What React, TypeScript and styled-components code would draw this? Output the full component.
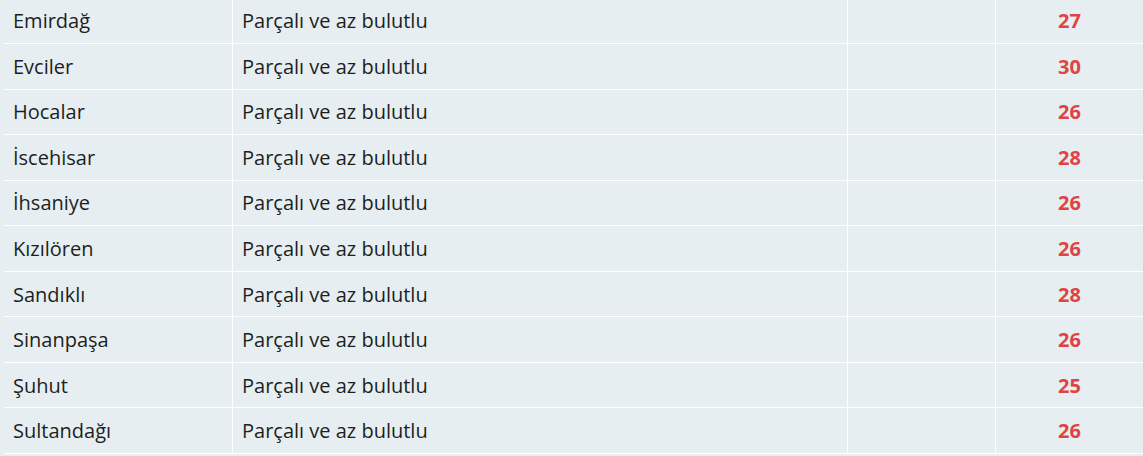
import styled, { createGlobalStyle } from 'styled-components';

const GlobalStyle = createGlobalStyle`
  html, body {
    margin: 0;
    padding: 0;
    background-color: #e7eef2;
    font-family: "Open Sans", "Liberation Sans", sans-serif;
    overflow: hidden;
  }
`;

const TableWrap = styled.div`
  padding-left: 4px;
  margin-top: -1.5px;
`;

const Row = styled.div`
  display: grid;
  grid-template-columns: 229px 615px 148px 1fr;
  height: 45.55px;
  box-sizing: border-box;
  border-bottom: 1px solid #ffffff;
`;

const Cell = styled.div<{ $align?: 'left' | 'center' }>`
  display: flex;
  align-items: center;
  justify-content: ${p => (p.$align === 'center' ? 'center' : 'flex-start')};
  padding: 0 9px;
  border-right: 1px solid #ffffff;
  font-size: 20px;
  color: #1c1f22;
  white-space: nowrap;

  &:last-child {
    border-right: none;
  }
`;

const Temp = styled.span`
  color: #df4343;
  font-weight: 700;
  font-size: 20px;
`;

const rows = [
  { name: 'Emirdağ', desc: 'Parçalı ve az bulutlu', temp: 27 },
  { name: 'Evciler', desc: 'Parçalı ve az bulutlu', temp: 30 },
  { name: 'Hocalar', desc: 'Parçalı ve az bulutlu', temp: 26 },
  { name: 'İscehisar', desc: 'Parçalı ve az bulutlu', temp: 28 },
  { name: 'İhsaniye', desc: 'Parçalı ve az bulutlu', temp: 26 },
  { name: 'Kızılören', desc: 'Parçalı ve az bulutlu', temp: 26 },
  { name: 'Sandıklı', desc: 'Parçalı ve az bulutlu', temp: 28 },
  { name: 'Sinanpaşa', desc: 'Parçalı ve az bulutlu', temp: 26 },
  { name: 'Şuhut', desc: 'Parçalı ve az bulutlu', temp: 25 },
  { name: 'Sultandağı', desc: 'Parçalı ve az bulutlu', temp: 26 },
];

export default function App() {
  return (
    <>
      <GlobalStyle />
      <TableWrap>
        {rows.map(r => (
          <Row key={r.name}>
            <Cell>{r.name}</Cell>
            <Cell>{r.desc}</Cell>
            <Cell />
            <Cell $align="center">
              <Temp>{r.temp}</Temp>
            </Cell>
          </Row>
        ))}
      </TableWrap>
    </>
  );
}
